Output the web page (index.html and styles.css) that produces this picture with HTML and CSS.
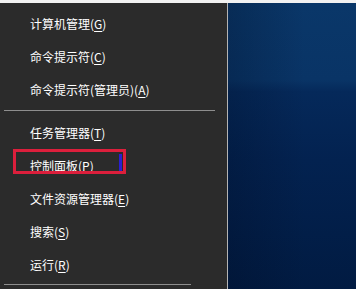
FILE: index.html
```html
<!DOCTYPE html>
<html lang="zh-CN">
<head>
<meta charset="utf-8">
<link rel="stylesheet" href="styles.css">
</head>
<body>
<div class="topstrip"></div>
<div class="screen">
  <div class="menu">
    <div class="item">计算机管理(<u>G</u>)</div>
    <div class="item">命令提示符(<u>C</u>)</div>
    <div class="item">命令提示符(管理员)(<u>A</u>)</div>
    <div class="sep"></div>
    <div class="item">任务管理器(<u>T</u>)</div>
    <div class="item marked">控制面板(<u>P</u>)<span class="mark"><span class="mark-bar"></span></span></div>
    <div class="item">文件资源管理器(<u>E</u>)</div>
    <div class="item">搜索(<u>S</u>)</div>
    <div class="item">运行(<u>R</u>)</div>
    <div class="sep sep-bottom"></div>
  </div>
  <div class="desktop"></div>
</div>
</body>
</html>
```

FILE: styles.css
```css
html, body {
  margin: 0;
  padding: 0;
  width: 356px;
  height: 289px;
  overflow: hidden;
  background: #2b2b2b;
}
.topstrip {
  height: 3px;
  background: #f2f2f2;
}
.screen {
  display: flex;
  height: 286px;
}
.menu {
  width: 227px;
  border-right: 1px solid #b4b4b4;
  background: #2b2b2b;
  padding-top: 4px;
  box-sizing: content-box;
}
.item {
  height: 33px;
  line-height: 33px;
  padding-left: 30px;
  color: #ffffff;
  font-family: "Noto Sans CJK SC", "Noto Sans", sans-serif;
  font-size: 12px;
  white-space: nowrap;
}
.item u {
  text-decoration-thickness: 1px;
  text-underline-offset: 2px;
}
.sep {
  height: 1px;
  margin: 4px 12px 5px 4px;
  background: #8e8e8e;
}
.sep-bottom {
  margin: 3px 36px 0 4px;
}
.marked {
  position: relative;
}
.mark {
  position: absolute;
  left: 13px;
  top: 0;
  width: 113px;
  height: 25px;
  box-sizing: border-box;
  border: 3px solid #dc1f3c;
}
.mark-bar {
  position: absolute;
  left: 103px;
  top: 2px;
  width: 3px;
  height: 17px;
  background: #2a1fd2;
}
.desktop {
  flex: 1;
  background:
    linear-gradient(90deg, rgba(0, 10, 30, 0.25) 0%, rgba(0, 10, 30, 0) 60%),
    linear-gradient(180deg, #0a3769 0%, #093466 27%, #05295a 31%, #032250 55%, #011b42 100%);
}
```
